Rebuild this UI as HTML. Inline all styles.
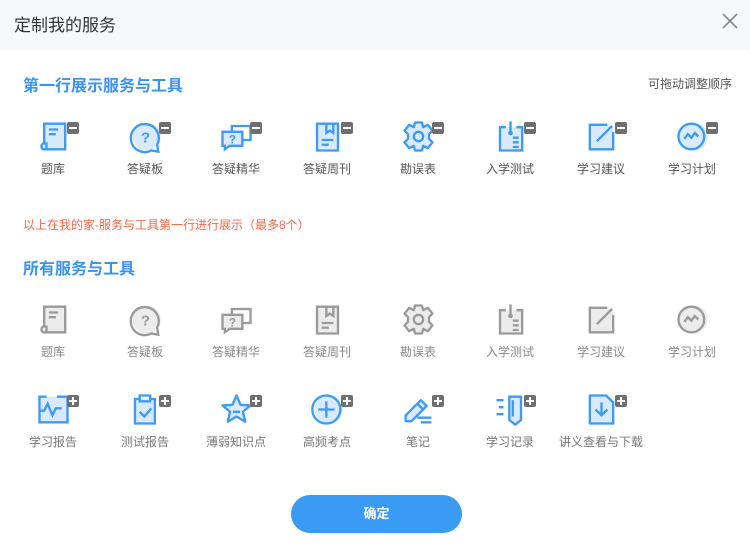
<!DOCTYPE html>
<html><head><meta charset="utf-8"><style>
*{margin:0;padding:0;box-sizing:border-box}
body{width:750px;height:546px;background:#fff;font-family:"Liberation Sans","Noto Sans CJK SC",sans-serif;position:relative;overflow:hidden}
.hd{position:absolute;left:0;top:0;width:750px;height:50px;background:#f7f8fb}
.hd .t{position:absolute;left:14px;top:11px;font-size:17px;color:#333}
.x{position:absolute;left:722px;top:13px}
.st{position:absolute;left:23px;font-size:16px;font-weight:bold;color:#3b93f0}
.tip{position:absolute;right:18px;top:75px;font-size:12px;color:#555}
.note{position:absolute;left:23px;top:216px;font-size:12px;color:#f5694a}
.it{position:absolute;width:90px;text-align:center}
.it svg.i{position:absolute;left:28px;top:-3px;width:35px;height:35px;overflow:visible}
.it .l{position:absolute;left:0;top:38px;width:90px;font-size:12px;white-space:nowrap}
.b{position:absolute;left:59px;top:0;width:12px;height:12px;background:#6f6f6f;border-radius:2px}
.b:before{content:"";position:absolute;left:2px;top:5px;width:8px;height:2px;background:#fff}
.b.p:after{content:"";position:absolute;left:5px;top:2px;width:2px;height:8px;background:#fff}
.blue{color:#3d9af5;--f:#d9eafd}
.gray{color:#9a9a9a;--f:#ececec}
.btn{position:absolute;left:291px;top:495px;width:171px;height:38px;border-radius:19px;background:#3a9bf5;color:#fff;font-size:13px;font-weight:bold;text-align:center;line-height:38px}
</style></head><body>
<svg width="0" height="0" style="position:absolute">
<defs>
<symbol id="s1" viewBox="0 0 30 30"><rect fill="var(--f)" x="6" y="3" width="20" height="24"/><path d="M7 22V4h18v22H6a3 3 0 0 1 0-5h3v5M11 9h8M11 13h6" fill="none" stroke="currentColor" stroke-width="2"/></symbol>
<symbol id="s2" viewBox="0 0 30 30"><circle fill="var(--f)" cx="16" cy="15" r="12"/><path d="M25 22a12 12 0 1 0-5 5l6 1z" fill="none" stroke="currentColor" stroke-width="2"/><text x="15" y="20" font-size="13" font-weight="bold" text-anchor="middle" fill="currentColor" font-family="Liberation Sans">?</text></symbol>
<symbol id="s3" viewBox="0 0 30 30"><rect fill="var(--f)" x="4" y="11" width="16" height="12"/><path d="M11 10V6h16v12h-6M3 11h17v12H9l-4 3v-3H3z" fill="none" stroke="currentColor" stroke-width="2"/><text x="11.5" y="21" font-size="10" font-weight="bold" text-anchor="middle" fill="currentColor" font-family="Liberation Sans">?</text></symbol>
<symbol id="s4" viewBox="0 0 30 30"><rect fill="var(--f)" x="6" y="4" width="18" height="23"/><path d="M6 4h18v23H6zM14 4v8l3-2 3 2V4M10 18h10M10 22h6" fill="none" stroke="currentColor" stroke-width="2"/></symbol>
<symbol id="s5" viewBox="0 0 30 30"><path fill="var(--f)" d="M12 3h6l1 4 4-2 4 5-3 3v4l3 3-4 5-4-2-1 4h-6l-1-4-4 2-4-5 3-3v-4l-3-3 4-5 4 2z" stroke="currentColor" stroke-width="2" stroke-linejoin="round"/><circle cx="15" cy="15" r="4" fill="none" stroke="currentColor" stroke-width="2"/></symbol>
<symbol id="s6" viewBox="0 0 30 30"><rect fill="var(--f)" x="6" y="7" width="19" height="20"/><path d="M11 7H6v20h19V7h-5M15 2v10M17 16h5M17 20h5M17 24h5" fill="none" stroke="currentColor" stroke-width="2"/><circle cx="15" cy="12" r="2" fill="currentColor"/></symbol>
<symbol id="s7" viewBox="0 0 30 30"><rect fill="var(--f)" x="5" y="6" width="20" height="21"/><path d="M20 5H5v21h20V11M11 19L24 6" fill="none" stroke="currentColor" stroke-width="2"/></symbol>
<symbol id="s8" viewBox="0 0 30 30"><circle fill="var(--f)" cx="16" cy="15" r="12"/><circle cx="14" cy="15" r="11" fill="none" stroke="currentColor" stroke-width="2"/><path d="M8 17l3-4 3 3 3-4 3 3" fill="none" stroke="currentColor" stroke-width="2"/></symbol>
<symbol id="s9" viewBox="0 0 30 30"><rect fill="var(--f)" x="4" y="4" width="23" height="22"/><path d="M9 4H3v22h24V4h-9M3 16h4l3-6 4 10 3-6h5" fill="none" stroke="currentColor" stroke-width="2"/></symbol>
<symbol id="s10" viewBox="0 0 30 30"><rect fill="var(--f)" x="7" y="6" width="17" height="21"/><path d="M10 6H6v21h17V6h-4M10 3h9v5h-9zM10 17l4 4 6-7" fill="none" stroke="currentColor" stroke-width="2"/></symbol>
<symbol id="s11" viewBox="0 0 30 30"><path fill="var(--f)" d="M15 3l3.5 8 8.5.5-6.5 5.5 2 8.5L15 21l-7.5 4.5 2-8.5L3 11.5l8.5-.5z" stroke="currentColor" stroke-width="2" stroke-linejoin="round"/><path d="M12 17h6" stroke="currentColor" stroke-width="2"/></symbol>
<symbol id="s12" viewBox="0 0 30 30"><circle fill="var(--f)" cx="16" cy="15" r="12"/><circle cx="14" cy="15" r="12" fill="none" stroke="currentColor" stroke-width="2"/><path d="M14 8v14M7 15h14" stroke="currentColor" stroke-width="2"/></symbol>
<symbol id="s13" viewBox="0 0 30 30"><path fill="var(--f)" d="M4 20L17 7l5 5L9 25H4z" stroke="currentColor" stroke-width="2" stroke-linejoin="round"/><path d="M14 10l5 5M14 22h12M17 26h9" stroke="currentColor" stroke-width="2"/></symbol>
<symbol id="s14" viewBox="0 0 30 30"><path fill="var(--f)" d="M14 4h10v20l-5 4-5-4z" stroke="currentColor" stroke-width="2"/><path d="M3 7h6M5 13h4M3 19h6M17 7v14" stroke="currentColor" stroke-width="2"/></symbol>
<symbol id="s15" viewBox="0 0 30 30"><path fill="var(--f)" d="M5 3h14l6 6v18H5z" stroke="currentColor" stroke-width="2" stroke-linejoin="round"/><path d="M15 9v11M10 15l5 5 5-5" fill="none" stroke="currentColor" stroke-width="2"/></symbol>
</defs></svg>

<div class="hd"><div class="t">定制我的服务</div>
<svg class="x" width="16" height="16" viewBox="0 0 16 16"><path d="M1 1L15 15M15 1L1 15" stroke="#888" stroke-width="1.6"/></svg></div>

<div class="st" style="top:72px">第一行展示服务与工具</div>
<div class="tip">可拖动调整顺序</div>

<div class="it blue" style="left:8px;top:122px"><svg class="i"><use href="#s1"/></svg><div class="b"></div><div class="l" style="color:#555">题库</div></div>
<div class="it blue" style="left:100px;top:122px"><svg class="i"><use href="#s2"/></svg><div class="b"></div><div class="l" style="color:#555">答疑板</div></div>
<div class="it blue" style="left:191px;top:122px"><svg class="i"><use href="#s3"/></svg><div class="b"></div><div class="l" style="color:#555">答疑精华</div></div>
<div class="it blue" style="left:282px;top:122px"><svg class="i"><use href="#s4"/></svg><div class="b"></div><div class="l" style="color:#555">答疑周刊</div></div>
<div class="it blue" style="left:373px;top:122px"><svg class="i"><use href="#s5"/></svg><div class="b"></div><div class="l" style="color:#555">勘误表</div></div>
<div class="it blue" style="left:465px;top:122px"><svg class="i"><use href="#s6"/></svg><div class="b"></div><div class="l" style="color:#555">入学测试</div></div>
<div class="it blue" style="left:556px;top:122px"><svg class="i"><use href="#s7"/></svg><div class="b"></div><div class="l" style="color:#555">学习建议</div></div>
<div class="it blue" style="left:647px;top:122px"><svg class="i"><use href="#s8"/></svg><div class="b"></div><div class="l" style="color:#555">学习计划</div></div>

<div class="note">以上在我的家-服务与工具第一行进行展示（最多8个）</div>
<div class="st" style="top:255px">所有服务与工具</div>

<div class="it gray" style="left:8px;top:305px"><svg class="i"><use href="#s1"/></svg><div class="l" style="color:#888">题库</div></div>
<div class="it gray" style="left:100px;top:305px"><svg class="i"><use href="#s2"/></svg><div class="l" style="color:#888">答疑板</div></div>
<div class="it gray" style="left:191px;top:305px"><svg class="i"><use href="#s3"/></svg><div class="l" style="color:#888">答疑精华</div></div>
<div class="it gray" style="left:282px;top:305px"><svg class="i"><use href="#s4"/></svg><div class="l" style="color:#888">答疑周刊</div></div>
<div class="it gray" style="left:373px;top:305px"><svg class="i"><use href="#s5"/></svg><div class="l" style="color:#888">勘误表</div></div>
<div class="it gray" style="left:465px;top:305px"><svg class="i"><use href="#s6"/></svg><div class="l" style="color:#888">入学测试</div></div>
<div class="it gray" style="left:556px;top:305px"><svg class="i"><use href="#s7"/></svg><div class="l" style="color:#888">学习建议</div></div>
<div class="it gray" style="left:647px;top:305px"><svg class="i"><use href="#s8"/></svg><div class="l" style="color:#888">学习计划</div></div>

<div class="it blue" style="left:8px;top:395px"><svg class="i"><use href="#s9"/></svg><div class="b p"></div><div class="l" style="color:#777">学习报告</div></div>
<div class="it blue" style="left:100px;top:395px"><svg class="i"><use href="#s10"/></svg><div class="b p"></div><div class="l" style="color:#777">测试报告</div></div>
<div class="it blue" style="left:191px;top:395px"><svg class="i"><use href="#s11"/></svg><div class="b p"></div><div class="l" style="color:#777">薄弱知识点</div></div>
<div class="it blue" style="left:282px;top:395px"><svg class="i"><use href="#s12"/></svg><div class="b p"></div><div class="l" style="color:#777">高频考点</div></div>
<div class="it blue" style="left:373px;top:395px"><svg class="i"><use href="#s13"/></svg><div class="b p"></div><div class="l" style="color:#777">笔记</div></div>
<div class="it blue" style="left:465px;top:395px"><svg class="i"><use href="#s14"/></svg><div class="b p"></div><div class="l" style="color:#777">学习记录</div></div>
<div class="it blue" style="left:556px;top:395px"><svg class="i"><use href="#s15"/></svg><div class="b p"></div><div class="l" style="color:#777">讲义查看与下载</div></div>

<div class="btn">确定</div>
</body></html>
